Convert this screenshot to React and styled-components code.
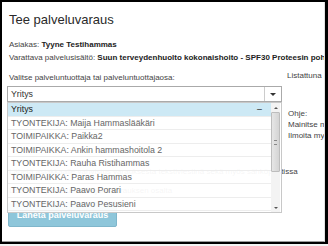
import styled, { createGlobalStyle } from "styled-components";

const GlobalStyle = createGlobalStyle`
  html, body {
    margin: 0;
    padding: 0;
    background: #f4f4f4;
  }
  body {
    font-family: "Liberation Sans", Arial, sans-serif;
  }
`;

const Frame = styled.div`
  width: 328px;
  height: 244px;
  box-sizing: border-box;
  border: solid #000;
  border-width: 2px 3px 2px 2px;
  display: flex;
`;

const Panel = styled.div`
  flex: 1;
  background: #fff;
  overflow: hidden;
  border-right: 1px solid #e2e2e2;
  border-bottom: 1px solid #9a9a9a;
  padding-left: 5px;
  white-space: nowrap;
`;

const Title = styled.h1`
  margin: 11px 0 0 2px;
  font-size: 13px;
  line-height: 14px;
  font-weight: normal;
  color: #2a2a2a;
`;

const Info = styled.div`
  margin: 11px 0 0 2px;
  font-size: 8px;
  line-height: 13px;
  color: #444;

  b {
    color: #222;
  }
`;

const Columns = styled.div`
  display: flex;
  margin-top: 7px;
`;

const LeftCol = styled.div`
  position: relative;
  width: 275px;
  flex-shrink: 0;
`;

const RightCol = styled.div`
  margin-left: 5px;
  font-size: 8px;
  color: #444;
`;

const Label = styled.div`
  padding-left: 2px;
  font-size: 8px;
  line-height: 13px;
  color: #444;
`;

const SelectBox = styled.div`
  margin-top: 2px;
  height: 16px;
  box-sizing: border-box;
  border: 1px solid #aaa;
  display: flex;
  align-items: center;
  font-size: 8.8px;
  color: #333;
`;

const SelectValue = styled.span`
  flex: 1;
  padding-left: 3px;
`;

const SelectArrow = styled.span`
  width: 16px;
  height: 100%;
  border-left: 1px solid #ccc;
  display: flex;
  align-items: center;
  justify-content: center;

  &::after {
    content: "";
    border-left: 3px solid transparent;
    border-right: 3px solid transparent;
    border-top: 3px solid #333;
  }
`;

const Dropdown = styled.div`
  position: absolute;
  top: 31px;
  left: 0;
  width: 275px;
  height: 111px;
  box-sizing: border-box;
  border: 1px solid #c8c8c8;
  background: rgba(255, 255, 255, 0.95);
  display: flex;
`;

const Options = styled.div`
  flex: 1;
  display: flex;
  flex-direction: column;
`;

const Option = styled.div`
  height: 13.5px;
  box-sizing: border-box;
  border-bottom: 1px solid #ededed;
  padding: 0 9px 0 3px;
  display: flex;
  align-items: center;
  justify-content: space-between;
  font-size: 8.8px;
  color: ${(p) => (p.$active ? "#222" : "#666")};
  background: ${(p) => (p.$active ? "#cde9f5" : "transparent")};
`;

const Scrollbar = styled.div`
  width: 9px;
  margin-right: 1px;
  display: flex;
  flex-direction: column;
  background: #f3f3f3;
`;

const ScrollBtn = styled.div`
  height: 9px;
  display: flex;
  align-items: center;
  justify-content: center;

  &::after {
    content: "";
    border-left: 2px solid transparent;
    border-right: 2px solid transparent;
    ${(p) =>
      p.$down ? "border-top: 2px solid #555;" : "border-bottom: 2px solid #555;"}
  }
`;

const Thumb = styled.div`
  height: 60px;
  box-sizing: border-box;
  border: 1px solid #bdbdbd;
  border-radius: 1px;
  background: linear-gradient(to right, #e6e6e6, #d4d4d4);
  display: flex;
  align-items: center;
  justify-content: center;

  &::after {
    content: "";
    width: 3px;
    height: 3px;
    border-top: 1px solid #888;
    border-bottom: 1px solid #888;
  }
`;

const Track = styled.div`
  flex: 1;
`;

const Note = styled.div`
  margin-top: ${(p) => p.$gap}px;
  padding-left: 2px;
  font-size: 8px;
  line-height: 13px;
  color: #444;
`;

const SendButton = styled.button`
  display: block;
  margin: 5.5px 0 0 1px;
  width: 109px;
  height: 25px;
  border: 1px solid #7fb6cb;
  border-radius: 2px;
  background: #8ec6da;
  color: #fff;
  font-family: inherit;
  font-size: 9px;
  font-weight: bold;
  padding: 0;
`;

const HelpBox = styled.div`
  margin-top: 28px;
  padding-left: 1px;
  line-height: 11px;
`;

const providers = [
  "Yritys",
  "TYONTEKIJA: Maija Hammaslääkäri",
  "TOIMIPAIKKA: Paikka2",
  "TOIMIPAIKKA: Ankin hammashoitola 2",
  "TYONTEKIJA: Rauha Ristihammas",
  "TOIMIPAIKKA: Paras Hammas",
  "TYONTEKIJA: Paavo Porari",
  "TYONTEKIJA: Paavo Pesusieni",
];

export default function App() {
  return (
    <>
      <GlobalStyle />
      <Frame>
        <Panel>
          <Title>Tee palveluvaraus</Title>
          <Info>
            <div>
              Asiakas: <b>Tyyne Testihammas</b>
            </div>
            <div>
              Varattava palvelusisältö:{" "}
              <b>Suun terveydenhuolto kokonaishoito - SPF30 Proteesin pohjaus</b>
            </div>
          </Info>
          <Columns>
            <LeftCol>
              <Label>Valitse palveluntuottaja tai palveluntuottajaosa:</Label>
              <SelectBox>
                <SelectValue>Yritys</SelectValue>
                <SelectArrow />
              </SelectBox>
              <Note $gap={62.5}>
                Lähetä asiakkaalle vahvistus varauksesta tekstiviestinä sekä myös sähköpostissa
              </Note>
              <Note $gap={6}>Lisätiedot palveluntuottajalle varauksen osalta</Note>
              <SendButton>Lähetä palveluvaraus</SendButton>
              <Dropdown>
                <Options>
                  {providers.map((name, i) => (
                    <Option key={name} $active={i === 0}>
                      <span>{name}</span>
                      {i === 0 && <span>–</span>}
                    </Option>
                  ))}
                </Options>
                <Scrollbar>
                  <ScrollBtn />
                  <Thumb />
                  <Track />
                  <ScrollBtn $down />
                </Scrollbar>
              </Dropdown>
            </LeftCol>
            <RightCol>
              <div>Listattuna aakkosjärjestyksessä</div>
              <HelpBox>
                <div>Ohje:</div>
                <div>Mainitse mahdolliset lisätiedot</div>
                <div>Ilmoita myös peruutuksesta</div>
              </HelpBox>
            </RightCol>
          </Columns>
        </Panel>
      </Frame>
    </>
  );
}
